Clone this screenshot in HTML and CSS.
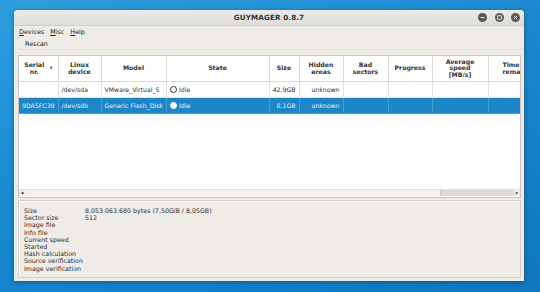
FILE: index.html
```html
<!DOCTYPE html>
<html lang="en">
<head>
    <meta charset="UTF-8">
    <title>GUYMAGER 0.8.7</title>
    <link rel="stylesheet" href="styles.css">
</head>
<body>

<div class="window">
    <div class="titlebar">
        <span class="title">GUYMAGER 0.8.7</span>
        <div class="wbuttons">
            <span class="wbtn"><svg width="9" height="9" viewBox="0 0 9 9"><circle cx="4.5" cy="4.5" r="4.5" fill="#595959"/><rect x="2.5" y="4" width="4" height="1" fill="#e6e6e6"/></svg></span>
            <span class="wbtn"><svg width="9" height="9" viewBox="0 0 9 9"><circle cx="4.5" cy="4.5" r="4.5" fill="#595959"/><rect x="2.7" y="2.7" width="3.6" height="3.6" fill="none" stroke="#e6e6e6" stroke-width="0.9"/></svg></span>
            <span class="wbtn"><svg width="9" height="9" viewBox="0 0 9 9"><circle cx="4.5" cy="4.5" r="4.5" fill="#595959"/><path d="M2.8 2.8 L6.2 6.2 M6.2 2.8 L2.8 6.2" stroke="#e6e6e6" stroke-width="1"/></svg></span>
        </div>
    </div>

    <div class="menubar">
        <span class="menu"><u>D</u>evices</span>
        <span class="menu"><u>M</u>isc</span>
        <span class="menu"><u>H</u>elp</span>
    </div>

    <div class="toolbar">
        <span class="tool">Rescan</span>
    </div>

    <div class="tableframe">
        <div class="tablearea">
            <table class="devices">
                <colgroup>
                    <col style="width:39px">
                    <col style="width:43px">
                    <col style="width:65px">
                    <col style="width:103px">
                    <col style="width:30px">
                    <col style="width:44px">
                    <col style="width:45px">
                    <col style="width:44px">
                    <col style="width:56px">
                    <col style="width:40px">
                </colgroup>
                <thead>
                    <tr>
                        <th class="sorted">Serial<br>nr.<span class="arrow">&#9650;</span></th>
                        <th>Linux<br>device</th>
                        <th>Model</th>
                        <th>State</th>
                        <th>Size</th>
                        <th>Hidden<br>areas</th>
                        <th>Bad<br>sectors</th>
                        <th>Progress</th>
                        <th>Average<br>speed<br>[MB/s]</th>
                        <th class="clip">Time<br>remaining</th>
                    </tr>
                </thead>
                <tbody>
                    <tr>
                        <td></td>
                        <td>/dev/sda</td>
                        <td>VMware_Virtual_S</td>
                        <td><span class="dot"></span>Idle</td>
                        <td class="num">42,9GB</td>
                        <td class="num">unknown</td>
                        <td></td>
                        <td></td>
                        <td></td>
                        <td></td>
                    </tr>
                    <tr class="selected">
                        <td>9DA5FC39</td>
                        <td>/dev/sdb</td>
                        <td>Generic Flash_Disk</td>
                        <td><span class="dot filled"></span>Idle</td>
                        <td class="num">8,1GB</td>
                        <td class="num">unknown</td>
                        <td></td>
                        <td></td>
                        <td></td>
                        <td></td>
                    </tr>
                </tbody>
            </table>
        </div>
        <div class="hscroll">
            <span class="sarrow">&#9664;</span>
            <div class="strack"><div class="sthumb"></div></div>
            <span class="sarrow">&#9654;</span>
        </div>
    </div>

    <div class="info">
        <div class="irow"><span class="ilabel">Size</span><span>8.053.063.680 bytes (7,50GiB / 8,05GB)</span></div>
        <div class="irow"><span class="ilabel">Sector size</span><span>512</span></div>
        <div class="irow"><span class="ilabel">Image file</span></div>
        <div class="irow"><span class="ilabel">Info file</span></div>
        <div class="irow"><span class="ilabel">Current speed</span></div>
        <div class="irow"><span class="ilabel">Started</span></div>
        <div class="irow"><span class="ilabel">Hash calculation</span></div>
        <div class="irow"><span class="ilabel">Source verification</span></div>
        <div class="irow"><span class="ilabel">Image verification</span></div>
    </div>
</div>

</body>
</html>
```

FILE: styles.css
```css
body {
    margin: 0;
    padding: 10px 0 0 14px;
    height: 292px;
    box-sizing: border-box;
    overflow: hidden;
    background: linear-gradient(160deg, #2f9ede 0%, #1a88cf 45%, #0f78bf 100%);
    font-family: "DejaVu Sans", sans-serif;
    color: #2e2e2e;
}

.window {
    width: 510px;
    height: 271px;
    background: #efebe7;
    border-radius: 4px 4px 0 0;
    box-shadow: 0 1px 5px rgba(0, 0, 0, 0.35);
    display: flex;
    flex-direction: column;
    overflow: hidden;
}

/* title bar */
.titlebar {
    height: 16px;
    flex: none;
    background: linear-gradient(#ebebea, #dcdcdb);
    border-bottom: 1px solid #d2d0cd;
    box-sizing: border-box;
    display: flex;
    align-items: center;
    justify-content: center;
    position: relative;
}

.title {
    font-size: 7.2px;
    font-weight: bold;
    color: #333;
    letter-spacing: 0.1px;
}

.wbuttons {
    position: absolute;
    right: 4px;
    top: 3px;
    display: flex;
    gap: 7.5px;
}

.wbtn {
    display: block;
    width: 9px;
    height: 9px;
}

.wbtn svg {
    display: block;
}

/* menu + toolbar */
.menubar {
    height: 11px;
    flex: none;
    display: flex;
    align-items: center;
    padding-left: 5px;
    gap: 6px;
    font-size: 6.4px;
    color: #222;
}

.menu u {
    text-decoration-thickness: 0.5px;
}

.toolbar {
    height: 13px;
    flex: none;
    display: flex;
    align-items: center;
    padding-left: 11px;
    padding-top: 1px;
    font-size: 6.4px;
    color: #222;
    border-bottom: 1px solid #e0ddd9;
    box-sizing: border-box;
}

/* device table */
.tableframe {
    height: 143px;
    flex: none;
    margin: 5px 3px 0 4px;
    background: #fff;
    border: 1px solid #c8c5c1;
    box-sizing: border-box;
    display: flex;
    flex-direction: column;
}

.tablearea {
    flex: 1;
    overflow: hidden;
}

.devices {
    border-collapse: collapse;
    table-layout: fixed;
    width: 509px;
    font-size: 6.2px;
}

.devices th {
    height: 25px;
    padding: 0 2px;
    font-weight: bold;
    color: #333;
    line-height: 6.6px;
    text-align: center;
    border-right: 1px solid #dcdad7;
    border-bottom: 1px solid #dcdad7;
    white-space: nowrap;
    overflow: hidden;
    position: relative;
}

.devices th.sorted {
    padding-right: 10px;
}

.arrow {
    position: absolute;
    right: 5px;
    top: 8px;
    font-size: 3.5px;
    color: #555;
}

.devices th.clip {
    text-align: left;
    padding-left: 14px;
}

.devices td {
    height: 15px;
    padding: 0 3px;
    border-right: 1px solid #e2e0dd;
    border-bottom: 1px solid #e2e0dd;
    white-space: nowrap;
    overflow: hidden;
    color: #2e2e2e;
}

.devices td.num {
    text-align: right;
}

.devices tr.selected td {
    background: #1d86c8;
    color: #e6f0f8;
    border-color: #4a9dd2;
}

.dot {
    display: inline-block;
    width: 5.5px;
    height: 5.5px;
    border: 0.8px solid #333;
    border-radius: 50%;
    margin-right: 2px;
    vertical-align: -1.5px;
    background: #fff;
}

.dot.filled {
    border-color: #fff;
}

.hscroll {
    height: 6px;
    flex: none;
    display: flex;
    align-items: center;
    border-top: 1px solid #e2e0dd;
    background: #f0eeeb;
    margin-bottom: 1px;
}

.sarrow {
    width: 6px;
    font-size: 3.5px;
    color: #444;
    text-align: center;
}

.strack {
    flex: 1;
    height: 6px;
    background: #dcdad6;
}

.sthumb {
    width: 416px;
    height: 6px;
    background: #f3f1ee;
    border-right: 1px solid #c9c6c2;
    box-sizing: border-box;
}

/* info panel */
.info {
    flex: 1;
    margin: 2px 3px 3px 4px;
    border: 1px solid #d4d1cd;
    box-shadow: inset 1px 1px 0 #fbfaf9;
    padding: 6px 0 0 5px;
    font-size: 6.3px;
    line-height: 7.2px;
    color: #2e2e2e;
}

.irow {
    display: flex;
}

.ilabel {
    width: 61px;
    flex: none;
}
```
